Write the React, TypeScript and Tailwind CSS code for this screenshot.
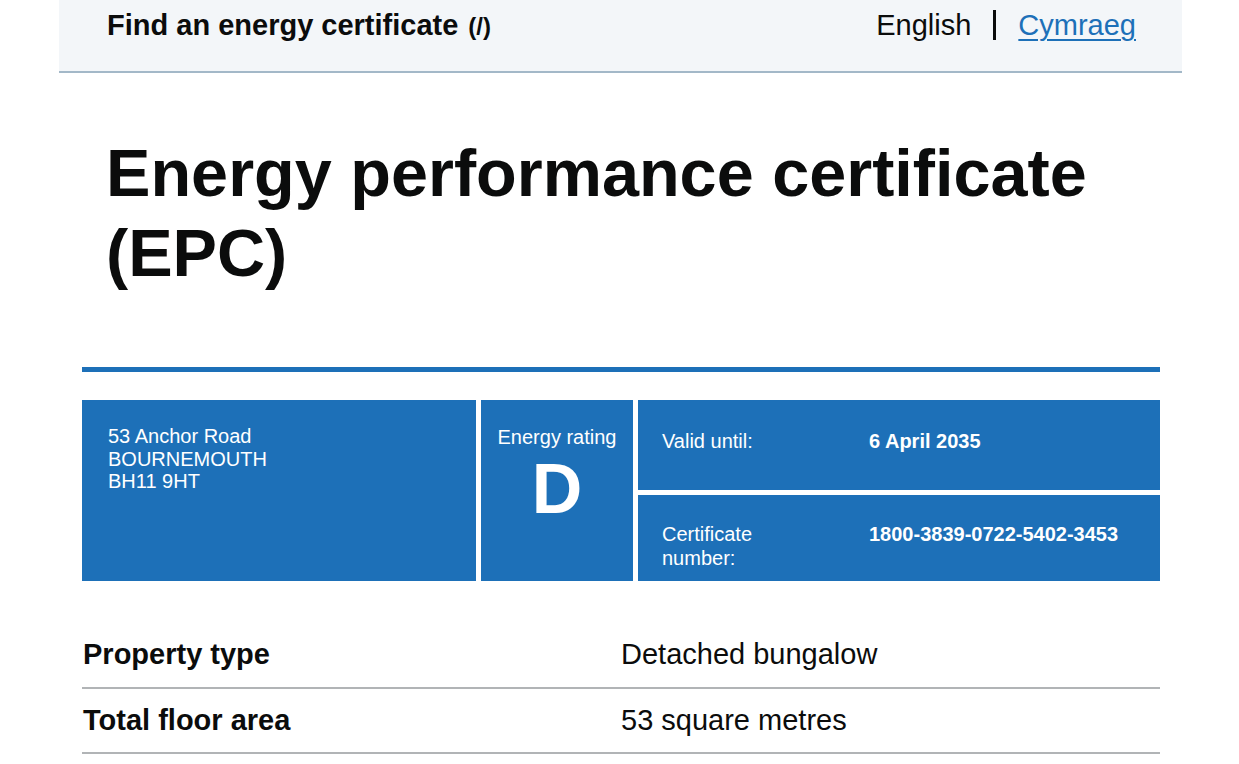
import React from "react";

const font = { fontFamily: '"Liberation Sans", Arial, sans-serif' };

export default function App() {
  return (
    <div className="min-h-screen bg-white text-[#0b0c0c]" style={font}>
      <header className="ml-[59px] w-[1123px] h-[73px] bg-[#f3f6f9] border-b-2 border-[#a3b8c8] pl-[48px] pr-[46px] pt-[8px] flex items-start justify-between">
        <div className="flex items-baseline gap-[10px] leading-[34px]">
          <span className="text-[29px] font-bold">Find an energy certificate</span>
          <span className="text-[24px] font-bold">(/)</span>
        </div>
        <div className="flex items-center gap-[22px] text-[29px] leading-[34px]">
          <span>English</span>
          <span className="block w-[3px] h-[30px] bg-[#0b0c0c]" />
          <a href="#" className="text-[#1d70b8] underline underline-offset-[4px] decoration-[2px]">Cymraeg</a>
        </div>
      </header>

      <main className="ml-[82px] w-[1078px]">
        <h1 className="mt-[60px] pl-[24px] text-[66.6px] leading-[80px] font-bold">
          Energy performance certificate (EPC)
        </h1>

        <div className="mt-[74px] h-[5px] bg-[#1d70b8]" />

        <div className="mt-[28px] grid grid-cols-[394px_152px_522px] gap-[5px] h-[181px] text-white">
          <div className="bg-[#1d70b8] pl-[26px] pt-[25px] text-[20px] leading-[22.5px]">
            <div>53 Anchor Road</div>
            <div>BOURNEMOUTH</div>
            <div>BH11 9HT</div>
          </div>
          <div className="bg-[#1d70b8] pt-[26px] flex flex-col items-center">
            <div className="text-[20px] leading-[22px]">Energy rating</div>
            <div className="text-[70px] leading-[70px] font-bold mt-[6px]">D</div>
          </div>
          <div className="grid grid-rows-[90px_1fr] gap-[5px]">
            <div className="bg-[#1d70b8] pl-[24px] pt-[29px] grid grid-cols-[207px_1fr] text-[20px] leading-[24px]">
              <div>Valid until:</div>
              <div className="font-bold">6 April 2035</div>
            </div>
            <div className="bg-[#1d70b8] pl-[24px] pt-[27px] grid grid-cols-[207px_1fr] text-[20px] leading-[24px]">
              <div>
                Certificate
                <br />
                number:
              </div>
              <div className="font-bold">1800-3839-0722-5402-3453</div>
            </div>
          </div>
        </div>

        <dl className="mt-[43px] text-[29px] leading-[31px]">
          <div className="grid grid-cols-2 border-b-2 border-[#b1b4b6] pt-[15px] pb-[17px]">
            <dt className="font-bold pl-[1px]">Property type</dt>
            <dd>Detached bungalow</dd>
          </div>
          <div className="grid grid-cols-2 border-b-2 border-[#b1b4b6] py-[16px]">
            <dt className="font-bold pl-[1px]">Total floor area</dt>
            <dd>53 square metres</dd>
          </div>
        </dl>
      </main>
    </div>
  );
}
